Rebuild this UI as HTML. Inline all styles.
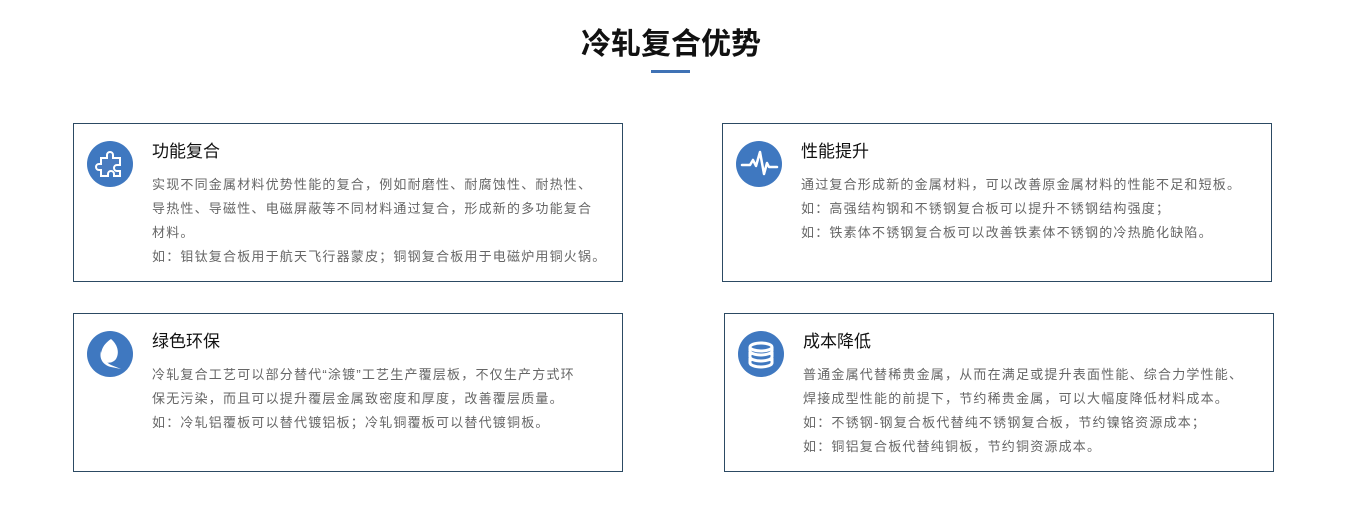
<!DOCTYPE html>
<html><head><meta charset="utf-8"><style>
body{margin:0;width:1346px;height:509px;background:#fff;font-family:"Liberation Sans","Noto Sans CJK SC",sans-serif;position:relative;overflow:hidden}
h1{position:absolute;left:0;width:1342px;top:26px;margin:0;text-align:center;font-size:30px;font-weight:bold;color:#111;line-height:38px}
.ul{position:absolute;left:651px;top:70px;width:39px;height:3px;background:#3f72b5}
.box{position:absolute;width:548px;height:157px;border:1px solid #2c4a63;box-sizing:content-box}
.ic{position:absolute;left:13px;top:17px;width:46px;height:46px;border-radius:50%;background:#3f78c0}
.ic svg{width:46px;height:46px}
.t{position:absolute;left:78px;top:17px;font-size:17px;color:#111;line-height:22px}
.b{position:absolute;left:78px;top:49px;white-space:nowrap;font-size:13px;letter-spacing:1.2px;color:#666;line-height:24px}
</style></head><body>
<h1>冷轧复合优势</h1><div class="ul"></div>

<div class="box" style="left:73px;top:123px">
<div class="ic"><svg viewBox="0 0 46 46"><path d="M14 17h6v-3a3 3 0 0 1 6 0v3h7v7h-3a3 3 0 0 0 0 6h3v5h-6v-2a3 3 0 0 0-6 0v2h-7v-6h-2a3 3 0 0 1 0-6h2z" fill="#4a7cc0" stroke="#fff" stroke-width="2"/></svg></div>
<div class="t">功能复合</div>
<div class="b">实现不同金属材料优势性能的复合，例如耐磨性、耐腐蚀性、耐热性、<br>导热性、导磁性、电磁屏蔽等不同材料通过复合，形成新的多功能复合<br>材料。<br>如：钼钛复合板用于航天飞行器蒙皮；铜钢复合板用于电磁炉用铜火锅。</div>
</div>

<div class="box" style="left:722px;top:123px">
<div class="ic"><svg viewBox="0 0 46 46"><path d="M6 24h8l3-5 3 6 4-14 4 22 3-11 2 4h8" fill="none" stroke="#fff" stroke-width="2.5" stroke-linejoin="round" stroke-linecap="round"/></svg></div>
<div class="t">性能提升</div>
<div class="b">通过复合形成新的金属材料，可以改善原金属材料的性能不足和短板。<br>如：高强结构钢和不锈钢复合板可以提升不锈钢结构强度；<br>如：铁素体不锈钢复合板可以改善铁素体不锈钢的冷热脆化缺陷。</div>
</div>

<div class="box" style="left:73px;top:313px">
<div class="ic"><svg viewBox="0 0 46 46"><path d="M24 8c-9 6-12 14-8 22 4 3 10 2 13-2 4-7 1-15-5-20z" fill="#fff"/><path d="M14 20c-2 8 2 14 10 16l10 2-10-4c-6-3-9-8-10-14z" fill="#fff"/></svg></div>
<div class="t">绿色环保</div>
<div class="b">冷轧复合工艺可以部分替代“涂镀”工艺生产覆层板，不仅生产方式环<br>保无污染，而且可以提升覆层金属致密度和厚度，改善覆层质量。<br>如：冷轧铝覆板可以替代镀铝板；冷轧铜覆板可以替代镀铜板。</div>
</div>

<div class="box" style="left:724px;top:313px">
<div class="ic"><svg viewBox="0 0 46 46"><g fill="none" stroke="#fff" stroke-width="3"><ellipse cx="23" cy="16" rx="11" ry="4"/><path d="M12 16v4c0 2 5 4 11 4s11-2 11-4v-4M12 21v5c0 2 5 4 11 4s11-2 11-4v-5M12 27v5c0 2 5 4 11 4s11-2 11-4v-5"/></g></svg></div>
<div class="t">成本降低</div>
<div class="b">普通金属代替稀贵金属，从而在满足或提升表面性能、综合力学性能、<br>焊接成型性能的前提下，节约稀贵金属，可以大幅度降低材料成本。<br>如：不锈钢-钢复合板代替纯不锈钢复合板，节约镍铬资源成本；<br>如：铜铝复合板代替纯铜板，节约铜资源成本。</div>
</div>
</body></html>
